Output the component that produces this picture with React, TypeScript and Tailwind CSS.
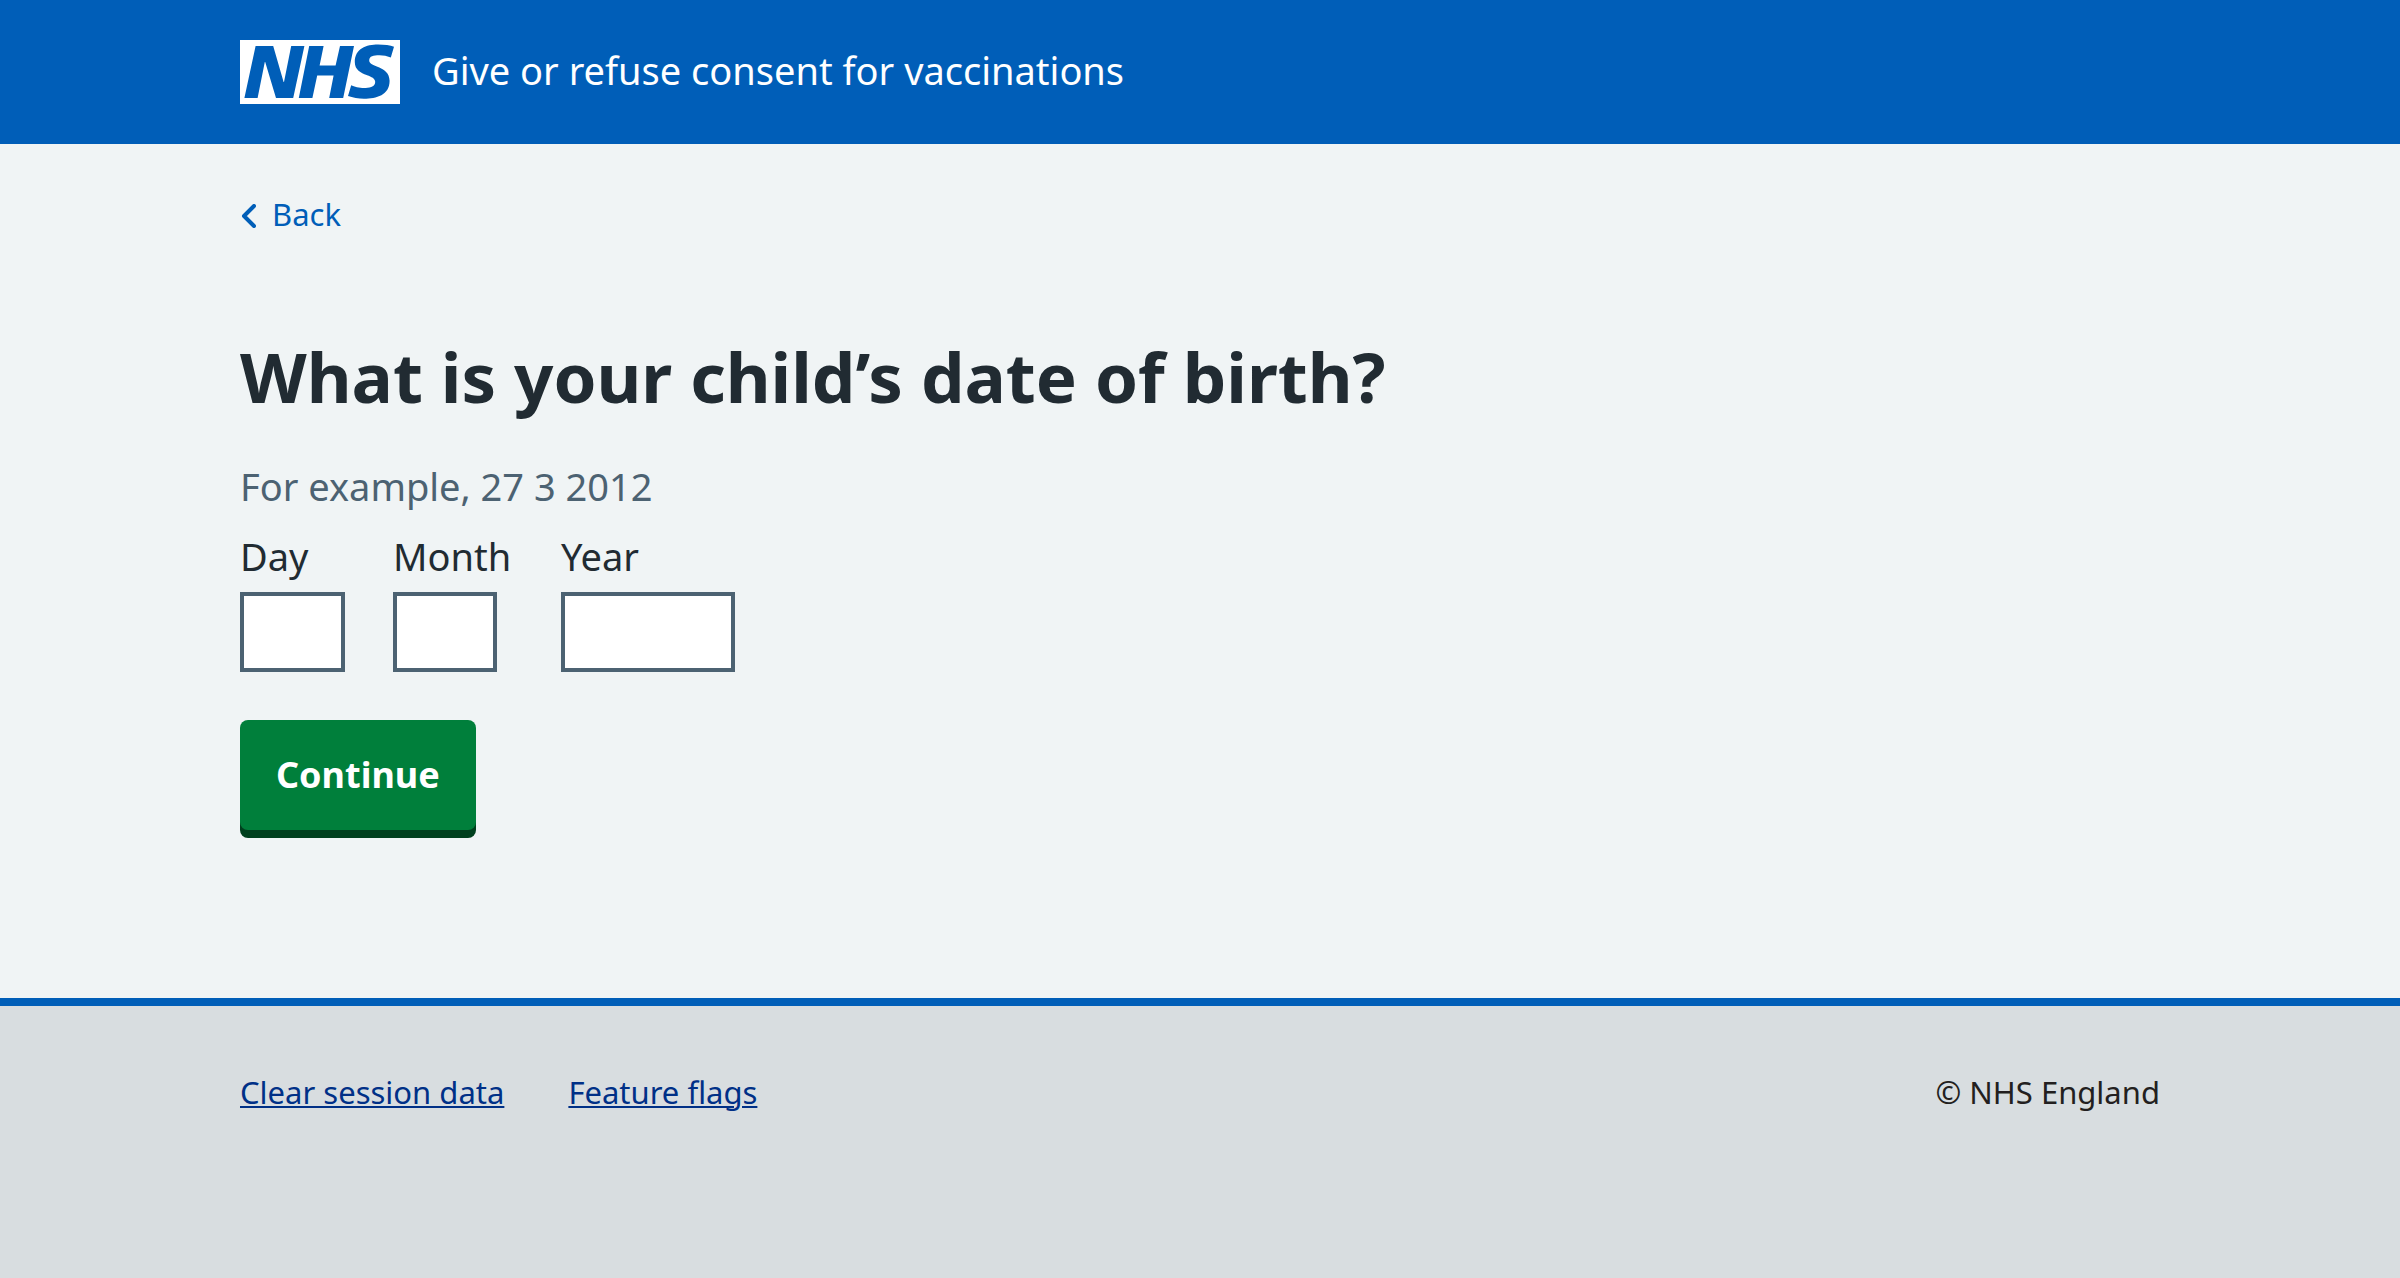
import type { ReactNode } from "react";

function Container({ className = "", children }: { className?: string; children: ReactNode }) {
  return <div className={`mx-auto w-4/5 ${className}`}>{children}</div>;
}

function NhsLogo() {
  return (
    <svg className="h-16 w-40 shrink-0" viewBox="0 0 200 80" role="img" aria-label="NHS" fill="#fff">
      <path d="M200 0v80H0V0h200Zm-27.5 5.5c-14.5 0-29 5-29 22 0 10.2 7.7 13.5 14.7 16.3l.7.3c5.4 2 10.1 3.9 10.1 8.4 0 6.5-8.5 7.5-14 7.5s-12.5-1.5-16-3.5L135 70c5.5 2 13.5 3.5 20 3.5 15.5 0 32-4.5 32-22.5 0-19.5-25.5-16.5-25.5-25.5 0-5.5 5.5-6.5 12.5-6.5a35 35 0 0 1 14.5 3l4-13.5c-4.5-2-12-3-20-3Zm-131 2h-22l-14 65H22l9-45h.5l13.5 45h21.5l14-65H64l-9 45h-.5l-13-45Zm63 0h-18l-13 65h17l6-28H117l-5.5 28H129l13.5-65H125L119.5 32h-20l5-24.5Z" />
    </svg>
  );
}

function DateField({
  id,
  label,
  group,
  input,
}: {
  id: string;
  label: string;
  group: string;
  input: string;
}) {
  return (
    <div className={`flex flex-col gap-2 ${group}`}>
      <label htmlFor={id} className="leading-[56px]">
        {label}
      </label>
      <input
        id={id}
        name={id}
        type="text"
        inputMode="numeric"
        className={`h-20 border-4 border-[#4c6272] bg-white px-2 outline-none focus:border-[#212b32] focus:ring-4 focus:ring-[#ffeb3b] ${input}`}
      />
    </div>
  );
}

export default function App() {
  return (
    <div className="flex min-h-screen flex-col bg-[#f0f4f5] font-['Noto_Sans','Open_Sans',sans-serif] text-[38px] text-[#212b32]">
      <header className="bg-[#005eb8] py-10 text-white">
        <Container>
          <a href="#" className="flex items-start gap-8">
            <NhsLogo />
            <span className="leading-[60px]">Give or refuse consent for vaccinations</span>
          </a>
        </Container>
      </header>

      <main className="pt-12 pb-[168px]">
        <Container>
          <a href="#" className="flex w-fit items-center gap-4 text-[31px] leading-[44px] text-[#005eb8]">
            <svg className="mt-1 h-6 w-4" viewBox="0 0 16 24" fill="none" stroke="currentColor" strokeWidth="4" strokeLinecap="round" strokeLinejoin="round" aria-hidden="true">
              <path d="M14 2 4 12l10 10" />
            </svg>
            Back
          </a>

          <form onSubmit={(e) => e.preventDefault()}>
            <fieldset className="mt-[98px]">
              <legend>
                <h1 className="text-[69px] leading-[84px] font-bold">What is your child’s date of birth?</h1>
              </legend>
              <p className="mt-10 leading-[56px] text-[#4c6272]">For example, 27 3 2012</p>
              <div className="mt-[14px] flex gap-12">
                <DateField id="day" label="Day" group="w-[105px]" input="w-full" />
                <DateField id="month" label="Month" group="w-[120px]" input="w-[104px]" />
                <DateField id="year" label="Year" group="w-[174px]" input="w-full" />
              </div>
            </fieldset>
            <button
              type="submit"
              className="mt-12 block rounded-lg bg-[#007f3b] px-9 py-[27px] text-[36px] leading-[56px] font-bold text-white shadow-[0_8px_0_#00401e]"
            >
              Continue
            </button>
          </form>
        </Container>
      </main>

      <footer className="grow border-t-8 border-[#005eb8] bg-[#d8dde0] pt-16 text-[31px] leading-[44px]">
        <Container className="flex justify-between">
          <ul className="flex gap-16 text-[#003087]">
            <li>
              <a href="#" className="underline decoration-2 underline-offset-2">
                Clear session data
              </a>
            </li>
            <li>
              <a href="#" className="underline decoration-2 underline-offset-2">
                Feature flags
              </a>
            </li>
          </ul>
          <p className="text-[#231f20]">© NHS England</p>
        </Container>
      </footer>
    </div>
  );
}
